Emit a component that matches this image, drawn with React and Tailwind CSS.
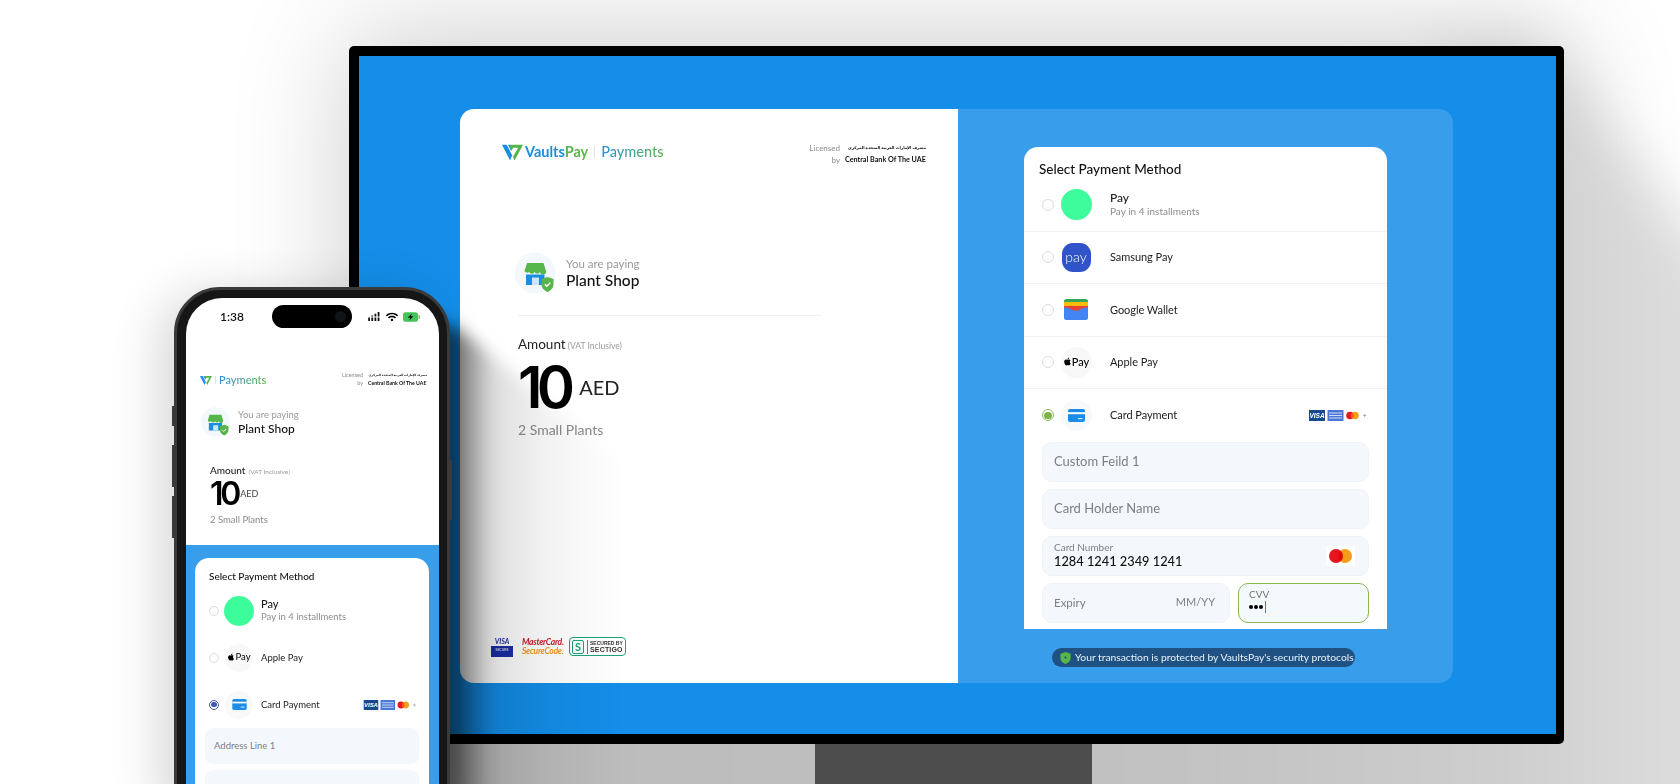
import { FaApple, FaWifi } from "react-icons/fa";

const arabicName = "مصرف الإمارات العربية المتحدة المركزي";

function LogoMark({ className }) {
  return (
    <svg viewBox="0 0 24 20" className={className}>
      <path d="M0 1h5.400l6.200 12-2.400 6z" fill="#1b8de0" />
      <path d="M6.800 1h2.700l2.300 4.500-1.400 2.700z" fill="#1b8de0" />
      <path d="M9.500 1H24l-9.600 18-1.900-4.200 6-10.200h-5.700l-2 3.400-1.300-2.400z" fill="#55b548" />
    </svg>
  );
}

function StoreIcon({ className }) {
  return (
    <svg viewBox="0 0 42 42" className={className}>
      <circle cx="20" cy="21" r="20.500" fill="#f2f8fc" />
      <path d="M12 11h16.500l2.500 8a3 3 0 0 1-6 1 3 3 0 0 1-5.500 0 3 3 0 0 1-5.500 0 3 3 0 0 1-4.500-1z" fill="#56b649" />
      <path d="M11 22.500h18.500V33H11z" fill="#1b8de0" />
      <path d="M17 25.500h7V33h-7z" fill="#cfe6f8" />
      <path d="M32.500 25l6 2v5c0 4-2.600 6.500-6 8-3.400-1.500-6-4-6-8v-5z" fill="#56b649" />
      <path d="M29.800 32.300l2 2 3.500-3.600" fill="none" stroke="#fff" strokeWidth="1.300" />
    </svg>
  );
}

function CardLogos({ className }) {
  return (
    <svg viewBox="0 0 60 11" className={className}>
      <rect width="16" height="11" fill="#17498f" />
      <text x="8" y="8" textAnchor="middle" fontSize="6.500" fontWeight="800" fontStyle="italic" fill="#fff" fontFamily="Liberation Sans, sans-serif">VISA</text>
      <rect x="18.500" width="16" height="11" fill="#4a77d6" />
      <path d="M20 3h13M20 5.500h13M20 8h13" stroke="#cfdcf7" strokeWidth="1" />
      <circle cx="41" cy="5.500" r="3.800" fill="#e8161f" />
      <circle cx="46" cy="5.500" r="3.800" fill="#f59c1a" />
      <path d="M43.500 2.600a3.800 3.800 0 0 1 0 5.800 3.800 3.800 0 0 1 0-5.800z" fill="#f2591d" />
      <path d="M54 5.500h3.400M55.700 3.800v3.400" stroke="#999" strokeWidth=".7" />
    </svg>
  );
}

function Radio({ checked, dot = "bg-[#7db548]", ring = "border-[#8cc05a]", className }) {
  return (
    <span className={`flex shrink-0 items-center justify-center rounded-full border bg-white ${checked ? ring : "border-[#dcdcdc]"} ${className}`}>
      {checked && <span className={`block h-[72%] w-[72%] rounded-full ${dot}`} />}
    </span>
  );
}

function CardIcon({ className }) {
  return (
    <svg viewBox="0 0 17 13" className={className}>
      <rect width="17" height="13" rx="2" fill="#1b8de8" />
      <rect y="3.200" width="17" height="2" fill="#fff" />
      <rect x="10" y="9" width="4.500" height="1.200" fill="#cfe6f8" />
    </svg>
  );
}

function WalletIcon() {
  return (
    <svg viewBox="0 0 24 21" className="h-[21px] w-[24px]">
      <rect width="24" height="12" rx="2.500" fill="#35a853" />
      <rect y="3" width="24" height="8" fill="#fbbc04" />
      <path d="M0 7h24v4l-7 4H7L0 11z" fill="#ea4335" />
      <path d="M0 8.500c3 0 5 .5 7.500 2 3 1.700 6 1.700 9 0 2.500-1.500 4.500-2 7.500-2V18.500a2.500 2.500 0 0 1-2.500 2.500h-19A2.500 2.500 0 0 1 0 18.500z" fill="#4285f4" />
    </svg>
  );
}

function DesktopRow({ icon, name, sub, checked, right, last }) {
  return (
    <div className={`flex h-[52.500px] items-center pl-[18px] ${last ? "" : "border-b border-[#f0f2f4]"}`}>
      <Radio checked={checked} className="h-3 w-3" />
      <div className="flex w-[44px] shrink-0 justify-center">{icon}</div>
      <div className="ml-3 flex-1">
        <div className="text-[11px] leading-[14px] tracking-[-0.005em] text-[#1b1b1b]">{name}</div>
        {sub && <div className="text-[10px] leading-[13px] text-[#8d8d8d]">{sub}</div>}
      </div>
      {right}
    </div>
  );
}

function Field({ label }) {
  return (
    <div className="flex h-10 items-center rounded-[10px] border border-[#eef3f8] bg-[#f4f8fc] pl-[11px] text-[13px] text-[#7b7f84]">
      {label}
    </div>
  );
}

function ApplePay({ className, text }) {
  return (
    <div className={`flex items-center justify-center rounded-full bg-[#f8f8f8] text-black ${className}`}>
      <FaApple className="mb-px" />
      <span className={text}>Pay</span>
    </div>
  );
}

function DesktopCard() {
  return (
    <div className="h-[482px] w-[363px] overflow-hidden rounded-t-[14px] bg-white">
      <div className="h-[32px] pl-[15px] pt-[14px] text-[13.500px] font-medium leading-4 text-[#111]">Select Payment Method</div>
      <DesktopRow
        name={<span className="text-[12px] font-medium">Pay</span>}
        sub="Pay in 4 installments"
        icon={<span className="block h-[31px] w-[31px] rounded-full bg-[#3dfc9c]" />}
      />
      <DesktopRow
        name="Samsung Pay"
        icon={
          <span className="flex h-[29px] w-[29px] items-center justify-center rounded-[11px] bg-[#3053c9] text-[14px] font-light leading-none text-white">
            pay
          </span>
        }
      />
      <DesktopRow name="Google Wallet" icon={<WalletIcon />} />
      <DesktopRow name="Apple Pay" icon={<ApplePay className="h-[31px] w-[31px] text-[9px]" text="text-[11px] font-medium" />} />
      <DesktopRow
        checked
        last
        name="Card Payment"
        icon={
          <span className="flex h-[31px] w-[31px] items-center justify-center rounded-full bg-[#f8f9fa]">
            <CardIcon className="h-[13px] w-[17px]" />
          </span>
        }
        right={<CardLogos className="mr-[18px] h-[11px] w-[60px]" />}
      />
      <div className="mx-[18px] flex flex-col gap-[7px]">
        <Field label="Custom Feild 1" />
        <Field label="Card Holder Name" />
        <div className="flex h-10 items-center justify-between rounded-[10px] border border-[#eef3f8] bg-[#f4f8fc] pl-[11px] pr-[13px]">
          <div>
            <div className="text-[10px] leading-[12px] text-[#7b7f84]">Card Number</div>
            <div className="text-[12.800px] font-medium leading-[17px] text-[#111]">1284 1241 2349 1241</div>
          </div>
          <div className="flex h-[20px] w-[29px] items-center justify-center bg-white">
            <span className="h-[14px] w-[14px] rounded-full bg-[#e8141f]" />
            <span className="-ml-[5px] h-[14px] w-[14px] rounded-full bg-[#f59c1a] mix-blend-multiply" />
          </div>
        </div>
        <div className="flex gap-2">
          <div className="flex h-10 w-[188px] items-center justify-between rounded-[10px] border border-[#eef3f8] bg-[#f4f8fc] pl-[11px] pr-[14px] text-[11.500px] text-[#7b7f84]">
            <span>Expiry</span>
            <span className="text-[11px]">MM/YY</span>
          </div>
          <div className="h-10 w-[131px] rounded-[10px] border-[1.500px] border-[#8ab84e] bg-[#f4f9fc] pl-[10px] pt-[4px]">
            <div className="text-[10px] leading-[12px] text-[#6f7378]">CVV</div>
            <div className="flex h-[14px] items-center gap-px">
              <span className="h-1 w-1 rounded-full bg-black" />
              <span className="h-1 w-1 rounded-full bg-black" />
              <span className="h-1 w-1 rounded-full bg-black" />
              <span className="ml-px h-[12px] w-px bg-[#1b8de8]" />
            </div>
          </div>
        </div>
      </div>
    </div>
  );
}

function LeftPanel() {
  return (
    <div className="flex w-[498px] flex-col rounded-l-[14px] bg-white">
      <div className="mt-[33px] flex h-7 items-start justify-between pl-[42px] pr-[32px]">
        <div className="flex items-center">
          <LogoMark className="h-[19px] w-[21px]" />
          <span className="ml-[2px] text-[14.500px] font-bold leading-[20px] text-[#1b8de0]">
            Vaults<span className="text-[#5bb54a]">Pay</span>
          </span>
          <span className="mx-[6px] h-3 w-px bg-[#dde3e8]" />
          <span className="bg-[linear-gradient(90deg,#2b8fe0,#5bb54a)] bg-clip-text text-[14.500px] font-medium leading-[20px] text-transparent">
            Payments
          </span>
        </div>
        <div className="flex gap-[5px] text-[7.500px] leading-[12px]">
          <div className="text-right text-[8px] text-[#8b8b8b]">
            <div>Licensed</div>
            <div>by</div>
          </div>
          <div className="w-[81px] text-[#111]">
            <div dir="rtl" className="whitespace-nowrap text-[4px] font-bold">{arabicName}</div>
            <div className="whitespace-nowrap text-[7.200px] font-bold">Central Bank Of The UAE</div>
          </div>
        </div>
      </div>
      <div className="ml-[55px] mt-[82px] flex h-[42px] items-center">
        <StoreIcon className="h-[42px] w-[42px]" />
        <div className="ml-[9px]">
          <div className="text-[11.500px] leading-[15px] text-[#9a9a9a]">You are paying</div>
          <div className="text-[15.500px] font-medium leading-[19px] text-[#111]">Plant Shop</div>
        </div>
      </div>
      <div className="ml-[58px] mt-[21px] h-px w-[303px] bg-[#eeeeee]" />
      <div className="ml-[58px] mt-5 flex h-4 items-baseline gap-[2px] leading-4">
        <span className="text-[13.500px] text-[#222]">Amount</span>
        <span className="text-[8.500px] text-[#9a9a9a]">(VAT Inclusive)</span>
      </div>
      <div className="ml-[58px] mt-[10px] flex h-[50px] items-center">
        <span className="font-['Inter'] text-[58px] font-semibold leading-[50px] tracking-[-0.1em] text-black">10</span>
        <span className="ml-[10px] text-[20px] text-[#222]">AED</span>
      </div>
      <div className="ml-[58px] mt-[10px] text-[14px] leading-4 text-[#8a8a8a]">2 Small Plants</div>
      <div className="ml-[31px] mt-auto mb-[26px] flex items-center">
        <div className="flex w-[22px] flex-col items-center">
          <span className="text-[7px] font-bold italic leading-[9px] text-[#1a2f9c]">VISA</span>
          <span className="flex h-[11px] w-[22px] items-center justify-center bg-[#1a2fa8] text-[3.500px] text-white">SECURE</span>
        </div>
        <div className="ml-[9px] w-[39px] text-[8.500px] font-bold italic leading-[8.500px] tracking-[-0.03em]">
          <div className="text-[#c8202b]">MasterCard.</div>
          <div className="text-[#f09a1a]">SecureCode.</div>
        </div>
        <div className="ml-2 flex h-[19px] w-[57px] items-center rounded-[4px] border border-[#1ba37c] px-[2px]">
          <span className="flex h-[14px] w-[12px] items-center justify-center rounded-[2px] border border-[#1ba37c] text-[11px] font-bold leading-none text-[#1ba37c]">S</span>
          <div className="ml-[3px] border-l border-[#777] pl-[2px] font-['Liberation_Sans'] font-bold text-[#333]">
            <div className="text-[5px] leading-[6px]">SECURED BY</div>
            <div className="text-[7px] leading-[8px] tracking-wide">SECTIGO</div>
          </div>
        </div>
      </div>
    </div>
  );
}

function Monitor() {
  return (
    <div className="relative ml-[349px] mt-[46px] w-[1215px]">
      <div className="h-[698px] rounded-[5px] bg-black p-[10px] pr-2">
        <div className="h-[678px] bg-[#148ee9] pl-[101px] pt-[53px]">
          <div className="flex h-[573.500px] w-[993px]">
            <LeftPanel />
            <div className="flex-1 rounded-r-[14px] bg-[#389deb] pl-[66px] pt-[38px]">
              <DesktopCard />
              <div className="ml-[28px] mt-[19px] flex h-[19px] w-[303px] items-center rounded-full bg-[#1f5282] pl-2 text-[10.300px] text-[#e8f1f8]">
                <svg viewBox="0 0 12 14" className="h-[12px] w-[11px] shrink-0">
                  <path d="M6 0l6 2v5c0 3.500-2.500 5.700-6 7-3.500-1.300-6-3.500-6-7V2z" fill="#56b649" />
                  <circle cx="6" cy="6.500" r="1.300" fill="#1f5282" />
                </svg>
                <span className="ml-[4px] whitespace-nowrap">Your transaction is protected by VaultsPay's security protocols</span>
              </div>
            </div>
          </div>
        </div>
      </div>
      <div className="ml-[466px] h-10 w-[277px] bg-[#4d4d4d]" />
    </div>
  );
}

function PhoneRow({ icon, name, sub, checked, right }) {
  return (
    <div className="flex h-[47px] items-center pl-[14px]">
      <Radio checked={checked} dot="bg-[#3f5bae]" ring="border-[#3f5bae]" className="h-[10px] w-[10px]" />
      <div className="flex w-10 shrink-0 justify-center">{icon}</div>
      <div className="ml-[2px] flex-1">
        <div className="text-[9.500px] leading-[12px] text-[#1b1b1b]">{name}</div>
        {sub && <div className="text-[9.500px] leading-[12px] text-[#8d8d8d]">{sub}</div>}
      </div>
      {right}
    </div>
  );
}

function StatusIcons() {
  return (
    <div className="flex flex-1 items-center gap-[5px] pl-4">
      <svg viewBox="0 0 14 10" className="h-[9px] w-[13px]">
        <path d="M0 6h2v4H0zM3.500 6h2v4h-2zM7 6h2v4H7zM10.500 6h2v4h-2zM3.500 4h2v1h-2zM7 2h2v3H7zM10.500 0h2v5h-2z" fill="#111" />
      </svg>
      <FaWifi className="h-[10px] w-[12px] text-black" />
      <svg viewBox="0 0 18 10" className="h-[10px] w-[17px]">
        <rect width="16" height="10" rx="3" fill="#45c45a" />
        <rect x="16.500" y="3" width="1.300" height="4" rx=".6" fill="#45c45a" />
        <path d="M9.500 1L5 5.800h2.800L6.500 9 11 4.200H8.200z" fill="#111" />
      </svg>
    </div>
  );
}

function Phone() {
  return (
    <div className="absolute left-[174px] top-[287px] h-[540px] w-[276px] rounded-[46px] border-[3px] border-[#3a3a3a] bg-[#161616] p-2 pl-[9px] shadow-[-14px_6px_50px_rgba(0,0,0,0.16)]">
      <span className="absolute -left-[5px] top-[116px] h-5 w-[2px] bg-[#3a3a3a]" />
      <span className="absolute -left-[5px] top-[155px] h-[42px] w-[2px] bg-[#3a3a3a]" />
      <span className="absolute -left-[5px] top-[206px] h-[42px] w-[2px] bg-[#3a3a3a]" />
      <span className="absolute -right-[5px] top-[170px] h-[60px] w-[2px] bg-[#3a3a3a]" />
      <div className="h-full overflow-hidden rounded-[36px] bg-white">
        <div className="h-[247px] pt-[7px]">
          <div className="flex h-[23px] items-center">
            <div className="w-[86px] pl-[6px] text-center text-[12px] font-semibold text-[#111]">1:38</div>
            <div className="flex h-[23px] w-20 items-center justify-end rounded-full bg-black pr-[6px]">
              <span className="h-[11px] w-[11px] rounded-full bg-[#101418]" />
            </div>
            <StatusIcons />
          </div>
          <div className="mt-[45px] flex h-4 items-start justify-between pl-[14px] pr-3">
            <div className="flex items-center">
              <LogoMark className="h-[11px] w-[12px]" />
              <span className="mx-[3px] h-2 w-px bg-[#dde3e8]" />
              <span className="bg-[linear-gradient(90deg,#2b8fe0,#5bb54a)] bg-clip-text text-[11px] font-medium leading-[14px] text-transparent">
                Payments
              </span>
            </div>
            <div className="-mt-[2px] flex gap-[5px] text-[5.500px] leading-[8px]">
              <div className="text-right text-[#8b8b8b]">
                <div>Licensed</div>
                <div>by</div>
              </div>
              <div className="w-[59px] text-[#111]">
                <div dir="rtl" className="whitespace-nowrap text-[3px] font-bold">{arabicName}</div>
                <div className="whitespace-nowrap text-[5.200px] font-bold">Central Bank Of The UAE</div>
              </div>
            </div>
          </div>
          <div className="ml-[15px] mt-[18px] flex h-[30px] items-center">
            <StoreIcon className="h-[30px] w-[30px]" />
            <div className="ml-[7px]">
              <div className="text-[9.500px] leading-[12px] text-[#9a9a9a]">You are paying</div>
              <div className="text-[12px] font-medium leading-[15px] text-[#111]">Plant Shop</div>
            </div>
          </div>
          <div className="ml-6 mt-[27px] flex h-3 items-baseline gap-[3px] leading-3">
            <span className="text-[10px] font-medium text-[#222]">Amount</span>
            <span className="text-[6.500px] text-[#9a9a9a]">(VAT Inclusive)</span>
          </div>
          <div className="ml-6 mt-px flex h-[34px] items-center">
            <span className="font-['Inter'] text-[32px] font-semibold leading-[34px] tracking-[-0.1em] text-black">10</span>
            <span className="ml-[2px] text-[9px] text-[#444]">AED</span>
          </div>
          <div className="ml-6 mt-[3px] text-[9.500px] leading-3 text-[#8a8a8a]">2 Small Plants</div>
        </div>
        <div className="h-full bg-[#389deb] pl-[9px] pt-[13px]">
          <div className="h-full w-[234px] rounded-t-[14px] bg-white">
            <div className="h-[29px] pl-[14px] pt-3 text-[10px] font-medium leading-3 text-[#111]">Select Payment Method</div>
            <PhoneRow
              name={<span className="text-[11px] font-medium">Pay</span>}
              sub="Pay in 4 installments"
              icon={<span className="block h-[30px] w-[30px] rounded-full bg-[#3dfc9c]" />}
            />
            <PhoneRow name="Apple Pay" icon={<ApplePay className="h-7 w-7 text-[8px]" text="text-[9.500px]" />} />
            <PhoneRow
              checked
              name="Card Payment"
              icon={
                <span className="flex h-7 w-7 items-center justify-center rounded-full bg-[#f8f9fa]">
                  <CardIcon className="h-[11px] w-[15px]" />
                </span>
              }
              right={<CardLogos className="mr-[10px] h-[10px] w-[56px]" />}
            />
            <div className="mx-[10px] flex flex-col gap-[6px]">
              <div className="flex h-9 items-center rounded-lg bg-[#f4f8fc] pl-[9px] text-[9.500px] text-[#7b7f84]">Address Line 1</div>
              <div className="h-9 rounded-lg bg-[#f4f8fc]" />
            </div>
          </div>
        </div>
      </div>
    </div>
  );
}

export default function App() {
  return (
    <div className="relative h-[784px] w-[1680px] overflow-hidden bg-white font-['Lato','DejaVu_Sans',sans-serif]">
      {/* soft shadows behind the mockups */}
      <div className="absolute left-[349px] top-[46px] h-[698px] w-[1215px] shadow-[0_-10px_110px_rgba(0,0,0,0.2)]" />
      <div className="absolute left-0 top-0 h-[784px] w-[1680px] blur-[28px]">
        <div className="h-[860px] w-[1780px] bg-[linear-gradient(to_right,#b6b6b6,#c2c2c2_66%,#cdcdcd_84%,#dcdcdc_94%)] [clip-path:polygon(1480px_46px,1540px_46px,1780px_340px,1780px_860px,300px_860px,349px_700px)]" />
      </div>
      <Monitor />
      {/* phone shadow falling on the monitor */}
      <div className="absolute left-[440px] top-[320px] h-[464px] w-[190px] blur-[8px]">
        <div className="h-[520px] bg-[linear-gradient(to_right,rgba(0,0,0,0.8),rgba(0,0,0,0.5)_10%,rgba(0,0,0,0.13)_28%,rgba(0,0,0,0.05)_55%,rgba(0,0,0,0)_95%)] [clip-path:polygon(0_0,25px_14px,190px_150px,190px_520px,0_520px)]" />
      </div>
      <Phone />
    </div>
  );
}
